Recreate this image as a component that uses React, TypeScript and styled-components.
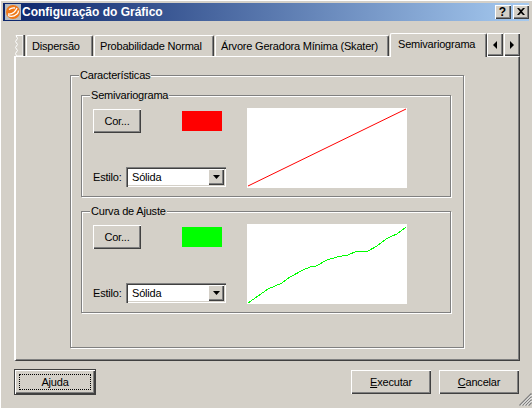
import styled, { createGlobalStyle } from 'styled-components';

const FACE = '#d4d0c8';
const SHADOW = '#808080';
const DARK = '#404040';

const GlobalStyle = createGlobalStyle`
  html, body {
    margin: 0;
    padding: 0;
    background: ${FACE};
  }
  * {
    box-sizing: border-box;
  }
`;

const raised = `
  border: 0;
  box-shadow: inset 1px 1px 0 #fff, inset -1px -1px 0 ${DARK}, inset -2px -2px 0 ${SHADOW};
`;

const Dialog = styled.div`
  position: relative;
  display: flex;
  flex-direction: column;
  width: 532px;
  height: 408px;
  padding: 3px 3px 0;
  background: ${FACE};
  box-shadow: inset 1px 1px 0 #fff;
  color: #000;
  font-family: 'Liberation Sans', Arial, sans-serif;
  font-size: 11px;
  letter-spacing: -0.2px;
`;

const TitleBar = styled.div`
  display: flex;
  align-items: center;
  height: 18px;
  padding: 0 0 0 2px;
  background: linear-gradient(90deg, #0a246a, #a6caf0);
`;

const TitleText = styled.span`
  flex: 1;
  margin-left: 1px;
  color: #fff;
  font-size: 12px;
  font-weight: bold;
  letter-spacing: 0;
  white-space: nowrap;
`;

const CaptionButton = styled.button`
  ${raised}
  display: flex;
  align-items: center;
  justify-content: center;
  width: 16px;
  height: 14px;
  margin-left: 2px;
  padding: 0 1px 1px 0;
  background: ${FACE};
  color: #000;
  font-family: 'Liberation Sans', sans-serif;
  font-size: 12px;
  font-weight: bold;
  line-height: 1;
`;

const Body = styled.div`
  display: flex;
  flex-direction: column;
  flex: 1;
  padding: 12px 10px 0 11px;
`;

const TabStrip = styled.div`
  position: relative;
  z-index: 1;
  display: flex;
  align-items: flex-end;
  height: 23px;
`;

const TornTab = styled.div`
  flex: none;
  width: 12px;
  height: 21px;
  overflow: hidden;
`;

const Tab = styled.div<{ $width: number; $active?: boolean }>`
  display: flex;
  align-items: center;
  flex: none;
  width: ${(p) => p.$width}px;
  height: ${(p) => (p.$active ? 24 : 21)}px;
  margin-right: ${(p) => (p.$active ? 0 : 1)}px;
  margin-bottom: ${(p) => (p.$active ? -1 : 0)}px;
  padding-left: ${(p) => (p.$active ? 7 : 5)}px;
  padding-bottom: ${(p) => (p.$active ? 3 : 1)}px;
  background: ${FACE};
  border-top: 1px solid #fff;
  border-left: 1px solid #fff;
  border-right: 1px solid ${DARK};
  border-radius: 2px 2px 0 0;
  box-shadow: inset -1px 0 0 ${SHADOW};
  white-space: nowrap;
`;

const ScrollButton = styled.button`
  ${raised}
  display: flex;
  align-items: center;
  justify-content: center;
  flex: none;
  width: 16px;
  height: 23px;
  margin-right: 1px;
  padding: 0;
  background: ${FACE};
`;

const Pane = styled.div`
  display: flex;
  justify-content: flex-end;
  width: 506px;
  height: 305px;
  padding: 11px 55px 0 0;
  background: ${FACE};
  border-top: 1px solid #fff;
  border-left: 2px solid #fff;
  border-right: 1px solid ${DARK};
  border-bottom: 1px solid ${DARK};
  box-shadow: inset -1px -1px 0 ${SHADOW};
`;

const Group = styled.fieldset<{ $width: number; $height: number }>`
  display: block;
  width: ${(p) => p.$width}px;
  height: ${(p) => p.$height}px;
  margin: 0;
  padding: 0;
  border: 1px solid ${SHADOW};
  box-shadow: inset 1px 1px 0 #fff, 1px 1px 0 #fff;
`;

const Legend = styled.legend`
  height: 14px;
  margin-left: 8px;
  padding: 0 1px;
  background: ${FACE};
  line-height: 14px;
`;

const OuterContent = styled.div`
  display: flex;
  flex-direction: column;
  gap: 7px;
  padding: 6px 0 0 10px;
`;

const SettingsRow = styled.div`
  display: flex;
  height: 86px;
  padding: 6px 0 0 11px;
`;

const Controls = styled.div`
  display: flex;
  flex-direction: column;
  justify-content: space-between;
  flex: none;
  width: 154px;
  height: 80px;
`;

const ColorRow = styled.div`
  display: flex;
  align-items: flex-start;
  gap: 41px;
  margin-top: 1px;
`;

const Button = styled.button<{ $width: number; $height?: number }>`
  ${raised}
  flex: none;
  width: ${(p) => p.$width}px;
  height: ${(p) => p.$height ?? 24}px;
  padding: 0 0 1px;
  background: ${FACE};
  color: #000;
  font-family: inherit;
  font-size: 11px;
  letter-spacing: inherit;
`;

const DefaultButton = styled(Button)`
  position: relative;
  box-shadow: inset 0 0 0 1px ${DARK}, inset 2px 2px 0 #fff, inset -2px -2px 0 ${DARK},
    inset -3px -3px 0 ${SHADOW};
  &::after {
    content: '';
    position: absolute;
    inset: 5px;
    border: 1px dotted #000;
  }
`;

const Swatch = styled.div<{ $color: string }>`
  width: 40px;
  height: 20px;
  margin-top: 2px;
  background: ${(p) => p.$color};
`;

const StyleRow = styled.div`
  display: flex;
  align-items: center;
  height: 20px;
  margin-bottom: 1px;
`;

const StyleLabel = styled.span`
  width: 33px;
`;

const Combo = styled.div`
  display: flex;
  align-items: center;
  justify-content: space-between;
  width: 100px;
  height: 20px;
  padding: 2px 2px 2px 6px;
  background: #fff;
  box-shadow: inset 1px 1px 0 ${SHADOW}, inset 2px 2px 0 ${DARK}, inset -1px -1px 0 #fff,
    inset -2px -2px 0 ${FACE};
`;

const ComboArrow = styled.div`
  ${raised}
  display: flex;
  align-items: center;
  justify-content: center;
  width: 16px;
  height: 16px;
  background: ${FACE};
`;

const Plot = styled.svg`
  display: block;
  flex: none;
  width: 160px;
  height: 80px;
  background: #fff;
`;

const Footer = styled.div`
  display: flex;
  align-items: center;
  justify-content: space-between;
  width: 505px;
  margin-top: 8px;
`;

const FooterRight = styled.div`
  display: flex;
  gap: 8px;
`;

const Grip = styled.svg`
  position: absolute;
  right: 0;
  bottom: 2px;
  width: 13px;
  height: 13px;
`;

const GREEN_CURVE =
  '1,79 21,65 35,59 43,53 56,46 63,43 69,42 80,36 90,33 101,31 110,27 121,27 130,22 139,15 145,12 150,10 159,3';

function AppIcon() {
  return (
    <svg width="16" height="16" viewBox="0 0 16 16">
      <rect width="16" height="16" fill="#b8bcc0" />
      <circle cx="8" cy="8" r="7" fill="#f07818" />
      <path d="M3 10c4 .5 7-1.500 9-6M4 5.500c2-1.500 4-2 6-1.500M3 11.500c3 1.500 6 1 9-1.500 1-1 1.500-2 1.500-3.500" stroke="#fff" strokeWidth="1.300" fill="none" />
    </svg>
  );
}

function CloseGlyph() {
  return (
    <svg width="8" height="7" viewBox="0 0 8 7">
      <path d="M0 0h2l2 2 2-2h2L5 3.500 8 7H6L4 5 2 7H0l3-3.500z" fill="#000" />
    </svg>
  );
}

function Triangle({ dir }: { dir: 'left' | 'right' | 'down' }) {
  const points = {
    left: '4,0 4,8 0,4',
    right: '0,0 0,8 4,4',
    down: '0,0 7,0 3.5,4',
  }[dir];
  const size = dir === 'down' ? [7, 4] : [4, 8];
  return (
    <svg width={size[0]} height={size[1]} viewBox={`0 0 ${size[0]} ${size[1]}`}>
      <polygon points={points} fill="#000" />
    </svg>
  );
}

function CurveSettings({
  title,
  color,
  line,
  curve,
  crisp,
}: {
  title: string;
  color: string;
  line: string;
  curve: string;
  crisp?: boolean;
}) {
  return (
    <Group $width={370} $height={109}>
      <Legend>{title}</Legend>
      <SettingsRow>
        <Controls>
          <ColorRow>
            <Button $width={48} $height={24}>
              Cor...
            </Button>
            <Swatch $color={color} />
          </ColorRow>
          <StyleRow>
            <StyleLabel>Estilo:</StyleLabel>
            <Combo>
              Sólida
              <ComboArrow>
                <Triangle dir="down" />
              </ComboArrow>
            </Combo>
          </StyleRow>
        </Controls>
        <Plot viewBox="0 0 160 80">
          <polyline
            points={curve}
            fill="none"
            stroke={line}
            strokeWidth="1"
            shapeRendering={crisp ? 'crispEdges' : 'auto'}
          />
        </Plot>
      </SettingsRow>
    </Group>
  );
}

export default function App() {
  return (
    <Dialog>
      <GlobalStyle />
      <TitleBar>
        <AppIcon />
        <TitleText>Configuração do Gráfico</TitleText>
        <CaptionButton>?</CaptionButton>
        <CaptionButton>
          <CloseGlyph />
        </CaptionButton>
      </TitleBar>
      <Body>
        <TabStrip>
          <TornTab>
            <svg width="12" height="21" viewBox="0 0 12 21">
              <path d="M9 21V.5H2l1.500 3-2 3 2 3-2 3 2 3-2 3 1 2.500z" fill={FACE} stroke="#fff" />
              <path d="M9.500 0v21" stroke={SHADOW} />
              <path d="M10.500 0v21" stroke={DARK} />
            </svg>
          </TornTab>
          <Tab $width={67}>Dispersão</Tab>
          <Tab $width={120}>Probabilidade Normal</Tab>
          <Tab $width={174}>Árvore Geradora Mínima (Skater)</Tab>
          <Tab $width={97} $active>
            Semivariograma
          </Tab>
          <ScrollButton>
            <Triangle dir="left" />
          </ScrollButton>
          <ScrollButton>
            <Triangle dir="right" />
          </ScrollButton>
        </TabStrip>
        <Pane>
          <Group $width={394} $height={280}>
            <Legend>Características</Legend>
            <OuterContent>
              <CurveSettings title="Semivariograma" color="#ff0000" line="#ff0000" curve="1,78 159,1" />
              <CurveSettings title="Curva de Ajuste" color="#00ff00" line="#00ff00" curve={GREEN_CURVE} crisp />
            </OuterContent>
          </Group>
        </Pane>
        <Footer>
          <DefaultButton $width={82} $height={26}>
            A<u>j</u>uda
          </DefaultButton>
          <FooterRight>
            <Button $width={80}>
              <u>E</u>xecutar
            </Button>
            <Button $width={80}>
              <u>C</u>ancelar
            </Button>
          </FooterRight>
        </Footer>
      </Body>
      <Grip viewBox="0 0 13 13">
        <path d="M12.500 .5L.5 12.500M12.500 3.500L3.500 12.500M12.500 6.500L6.500 12.500M12.500 9.500L9.500 12.500" stroke={SHADOW} strokeWidth="1.500" />
        <path d="M12.500 2L2 12.500M12.500 5L5 12.500M12.500 8L8 12.500" stroke="#fff" strokeWidth="1" />
      </Grip>
    </Dialog>
  );
}
